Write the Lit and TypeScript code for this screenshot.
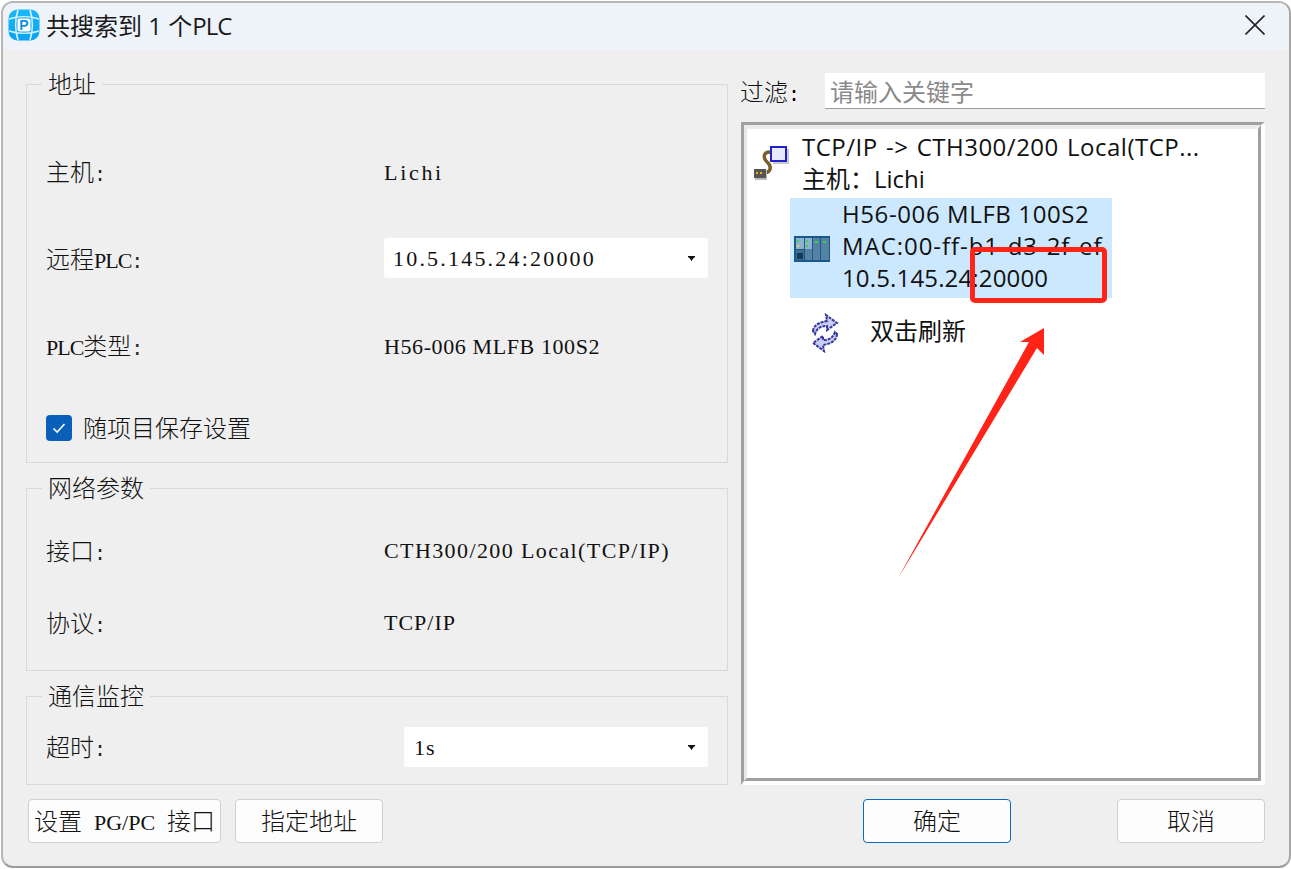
import { LitElement, html, css } from "lit";
import { customElement } from "lit/decorators.js";

@customElement("app-root")
export class AppRoot extends LitElement {
  static styles = css`
    :host { display: block; position: relative; width: 1291px; height: 869px; background: #fff; overflow: hidden; }
    * { box-sizing: border-box; }
    .win { width: 1290px; height: 867px; margin: 1px 0 0 1px; border: 2px solid #b6b6b6; border-bottom-color: #9c9c9c; border-right-color: #a8a8a8; border-radius: 12px; background: #efefef; overflow: hidden; display: flex; flex-direction: column; }
    .title { height: 47px; flex: none; background: #eef3f9; display: flex; align-items: center; padding: 0 24px 3px 5px; font: 24px "Noto Sans CJK SC", "Noto Sans", sans-serif; color: #1a1a1a; }
    .title .logo { width: 32px; height: 32px; flex: none; margin-right: 6px; }
    .title .cap { flex: 1; white-space: pre; font-family: "Open Sans", "Noto Sans CJK SC", sans-serif; font-size: 24px; line-height: 32px; }
    .title .cjk { font-family: "Noto Sans CJK SC", sans-serif; }
    .title .plc { letter-spacing: -1px; }
    .title .x { width: 20px; height: 20px; display: block; }
    .logotext { font: bold 14px "Liberation Sans", sans-serif; fill: #0f8fe0; }
    .body { display: grid; grid-template-columns: 702px 524px; column-gap: 13px; padding: 18px 0 0 23px; }
    .left { display: flex; flex-direction: column; gap: 9px; }
    fieldset { margin: 0; padding: 0 0 0 19px; border: 1px solid #d9d9d9; min-inline-size: 0; }
    legend { margin-left: -4px; padding: 0 6px; height: 32px; font: 300 24px/30px "Noto Sans CJK SC", sans-serif; color: #111; }
    .g1 { height: 395px; }
    .g2 { height: 199px; }
    .g3 { height: 105px; }
    .row { display: flex; align-items: center; font: 20px "Liberation Mono", monospace; color: #222; }
    .zh { font: 300 24px "Noto Sans CJK SC", sans-serif; color: #111; }
    .en { font: 22px "Liberation Serif", serif; color: #111; white-space: pre; }
    .pl { letter-spacing: -1px; }
    .s-lichi { letter-spacing: 2.7px; }
    .s-ip { letter-spacing: 2.2px; }
    .s-mlfb { letter-spacing: .6px; }
    .s-cth { letter-spacing: 1.4px; }
    .s-tcp { letter-spacing: 1px; }
    .s-1s { letter-spacing: 1px; }
    .lab { width: 338px; flex: none; white-space: pre; margin-bottom: 4px; }
    .g1 .row { height: 87px; }
    .g1 .first { margin-top: 29px; }
    .g1 .check { height: 76px; }
    .g2 .row { height: 72px; }
    .g2 .first { margin-top: 11px; }
    .g3 .row { height: 40px; margin-top: 15px; }
    .sel { height: 40px; background: #fff; border-radius: 3px; display: flex; align-items: center; padding: 2px 13px 0 9px; justify-content: space-between; color: #111; }
    .sel.a { width: 324px; margin-bottom: 3px; }
    .sel.b { width: 304px; margin-left: 20px; padding-left: 10px; }
    .tri { width: 7px; height: 5px; display: block; margin-bottom: 2px; }
    .box { width: 26px; height: 26px; border-radius: 4px; background: #0a5fb8; margin-right: 11px; display: flex; align-items: center; justify-content: center; }
    .box svg { width: 14px; height: 12px; display: block; }
    .check .zh { margin-bottom: 4px; }
    .right { display: flex; flex-direction: column; height: 717px; }
    .filter { display: flex; align-items: center; height: 36px; margin: 5px 0 13px; }
    .filter .f { width: 85px; margin: 0 0 2px -1px; flex: none; white-space: pre; font: 20px "Liberation Mono", monospace; }
    .input { flex: 1; height: 36px; background: #fff; border-bottom: 1px solid #999; padding-left: 5px; font: 24px/36px "Noto Sans CJK SC", sans-serif; color: #8a8a8a; }
    .list { flex: 1; min-height: 0; border-style: solid; border-width: 3px 4px 4px 3px; border-color: #a0a0a0 #fff #fff #a0a0a0; }
    .inner { height: 100%; background: #fff; border-style: solid; border-width: 4px 3px 3px 3px; border-color: #ececec #a0a0a0 #a0a0a0 #e8e8e8; font: 24px/32px "Open Sans", "Noto Sans CJK SC", sans-serif; color: #111; }
    .item { display: flex; align-items: center; }
    .i0 { padding: 2px 0 0 6px; }
    .i0 svg { width: 36px; height: 36px; flex: none; margin-right: 13px; }
    .i1 { margin: 3px 0 0 43px; width: 322px; height: 100px; background: #cce8ff; padding: 0 0 4px 3px; }
    .i1 svg { width: 38px; height: 28px; flex: none; margin: 6px 11px 0 0; }
    .i2 { margin: 13px 0 0 63px; height: 40px; }
    .i2 svg { width: 30px; height: 40px; flex: none; margin: 4px 30px 0 0; }
    .nw { white-space: pre; }
    .l-tcp { letter-spacing: .5px; word-spacing: 1.5px; }
    .l-h { letter-spacing: .6px; }
    .l-mac { letter-spacing: .95px; }
    .l-ip { letter-spacing: .15px; }
    .foot { grid-column: 1 / -1; display: flex; justify-content: space-between; padding: 14px 0 0 2px; }
    .bg { display: flex; }
    .bg.l { gap: 14px; }
    .bg.r { gap: 106px; }
    .btn { height: 44px; padding-bottom: 4px; display: flex; align-items: center; justify-content: center; background: #fdfdfd; border: 1px solid #cfcfcf; border-radius: 4px; font: 20px "Liberation Mono", monospace; color: #111; white-space: pre; }
    .btn.w194 { width: 193px; }
    .btn.w148 { width: 148px; }
    .btn.def { border-color: #0a6cc0; }
    .mark { position: absolute; left: 0; top: 0; width: 1291px; height: 869px; pointer-events: none; }
    .rect { position: absolute; left: 970px; top: 247px; width: 137px; height: 56px; border: 5px solid #ff2318; border-radius: 5px; pointer-events: none; }
  `;

  render() {
    return html`
      <div class="win">
        <div class="title">
          <svg class="logo" viewBox="0 0 32 32">
            <defs><linearGradient id="lg" x1="0" y1="0" x2="0" y2="1"><stop offset="0" stop-color="#1ab8fa"/><stop offset="1" stop-color="#08a2f2"/></linearGradient></defs>
            <rect x="0.5" y="0.5" width="31" height="31" rx="9" fill="url(#lg)"/>
            <path d="M1 10C10 7 22 7 31 10M1 22C10 25 22 25 31 22M10 1C7 10 7 22 10 31M22 1C25 10 25 22 22 31" fill="none" stroke="#d8f3ff" stroke-width="1.7"/>
            <rect x="9.5" y="9.5" width="13" height="13" rx="2" fill="#fff"/>
            <text class="logotext" x="16" y="21" text-anchor="middle">P</text>
          </svg>
          <span class="cap"><span class="cjk">共搜索到</span> 1 <span class="cjk">个</span><span class="plc">PLC</span></span>
          <svg class="x" viewBox="0 0 20 20"><path d="M0.5 0.5L19.5 19.5M19.5 0.5L0.5 19.5" stroke="#222" stroke-width="1.6" fill="none"/></svg>
        </div>
        <div class="body">
          <div class="left">
            <fieldset class="g1">
              <legend>地址</legend>
              <div class="row first"><span class="lab"><span class="zh">主机</span>:</span><span class="en s-lichi">Lichi</span></div>
              <div class="row">
                <span class="lab"><span class="zh">远程</span><span class="en pl">PLC</span>:</span>
                <div class="sel a"><span class="en s-ip">10.5.145.24:20000</span>${this.tri()}</div>
              </div>
              <div class="row"><span class="lab"><span class="en pl">PLC</span><span class="zh">类型</span>:</span><span class="en s-mlfb">H56-006 MLFB 100S2</span></div>
              <div class="row check">
                <span class="box"><svg viewBox="0 0 14 12"><path d="M1.5 6.5L5.2 10L12.5 2" fill="none" stroke="#fff" stroke-width="1.6"/></svg></span>
                <span class="zh">随项目保存设置</span>
              </div>
            </fieldset>
            <fieldset class="g2">
              <legend>网络参数</legend>
              <div class="row first"><span class="lab"><span class="zh">接口</span>:</span><span class="en s-cth">CTH300/200 Local(TCP/IP)</span></div>
              <div class="row"><span class="lab"><span class="zh">协议</span>:</span><span class="en s-tcp">TCP/IP</span></div>
            </fieldset>
            <fieldset class="g3">
              <legend>通信监控</legend>
              <div class="row">
                <span class="lab"><span class="zh">超时</span>:</span>
                <div class="sel b"><span class="en s-1s">1s</span>${this.tri()}</div>
              </div>
            </fieldset>
          </div>
          <div class="right">
            <div class="filter"><span class="f"><span class="zh">过滤</span>:</span><div class="input">请输入关键字</div></div>
            <div class="list">
              <div class="inner">
                <div class="item i0">
                  <svg viewBox="0 0 36 36">
                    <rect x="20" y="4" width="16" height="15" fill="#c9c9d4"/>
                    <rect x="18" y="2" width="15" height="14" fill="#e8eaff" stroke="#2222cc" stroke-width="2"/>
                    <path d="M17 7C10 7 10 13 14 17C19 21 18 27 12 28" fill="none" stroke="#7a5f2c" stroke-width="3.5"/>
                    <rect x="2" y="26" width="12" height="9" fill="#b9b9b9"/>
                    <rect x="1" y="24" width="12" height="9" fill="#555"/>
                    <rect x="3" y="27" width="2" height="2" fill="#f2b200"/><rect x="7" y="27" width="2" height="2" fill="#f2b200"/>
                  </svg>
                  <div><div class="nw l-tcp">TCP/IP -&gt; CTH300/200 Local(TCP...</div><div class="nw">主机：Lichi</div></div>
                </div>
                <div class="item i1">
                  <svg viewBox="0 0 38 28">
                    <rect x="1" y="1" width="36" height="26" fill="#17598c"/>
                    <rect x="3" y="3" width="8" height="11" fill="#8fb2cc"/><rect x="12" y="3" width="7" height="11" fill="#8fb2cc"/>
                    <rect x="20" y="3" width="7" height="22" fill="#5682a2"/><rect x="28" y="3" width="8" height="22" fill="#5682a2"/>
                    <rect x="12" y="14" width="7" height="11" fill="#5682a2"/><rect x="3" y="15" width="8" height="10" fill="#3f6f90"/>
                    <rect x="4" y="18" width="6" height="6" fill="#143a58"/>
                    <rect x="4" y="5" width="2" height="2" fill="#39d24a"/><rect x="4" y="10" width="2" height="2" fill="#d8e04a"/>
                    <rect x="13" y="5" width="2" height="2" fill="#39d24a"/><rect x="13" y="10" width="2" height="2" fill="#39d24a"/>
                    <rect x="22" y="6" width="3" height="2" fill="#39d24a"/><rect x="30" y="6" width="3" height="2" fill="#39d24a"/>
                  </svg>
                  <div><div class="nw l-h">H56-006 MLFB 100S2</div><div class="nw l-mac">MAC:00-ff-b1-d3-2f-ef</div><div class="nw l-ip">10.5.145.24:20000</div></div>
                </div>
                <div class="item i2">
                  <svg viewBox="0 0 30 40">
                    <path d="M3 18C3 13 9 9 17 8L16 2L27 10L17 17L17 13C11 13 7 15 5 21Z" fill="#c9cdf2" stroke="#35359c" stroke-width="2" stroke-dasharray="3 1"/>
                    <path d="M27 21C27 27 21 31 13 32L14 38L3 30L13 23L13 27C19 27 23 25 25 19Z" fill="#c9cdf2" stroke="#35359c" stroke-width="2" stroke-dasharray="3 1"/>
                  </svg>
                  <span>双击刷新</span>
                </div>
              </div>
            </div>
          </div>
          <div class="foot">
            <div class="bg l">
              <div class="btn w194"><span><span class="zh">设置</span> <span class="en">PG/PC</span> <span class="zh">接口</span></span></div>
              <div class="btn w148"><span class="zh">指定地址</span></div>
            </div>
            <div class="bg r">
              <div class="btn w148 def"><span class="zh">确定</span></div>
              <div class="btn w148"><span class="zh">取消</span></div>
            </div>
          </div>
        </div>
      </div>
      <div class="rect"></div>
      <svg class="mark" viewBox="0 0 1291 869">
        <defs><linearGradient id="ar" x1="897" y1="580" x2="1044" y2="328" gradientUnits="userSpaceOnUse"><stop offset="0" stop-color="#ff2318" stop-opacity=".3"/><stop offset=".04" stop-color="#ff2318"/></linearGradient></defs>
        <polygon points="1044,328 1020,342 1029,342 897,580 1037,348 1044,355" fill="url(#ar)"/>
      </svg>
    `;
  }

  tri() {
    return html`<svg class="tri" viewBox="0 0 7 5"><path d="M0 0H7V1.5H6L3.5 5L1 1.5H0Z" fill="#111"/></svg>`;
  }
}
